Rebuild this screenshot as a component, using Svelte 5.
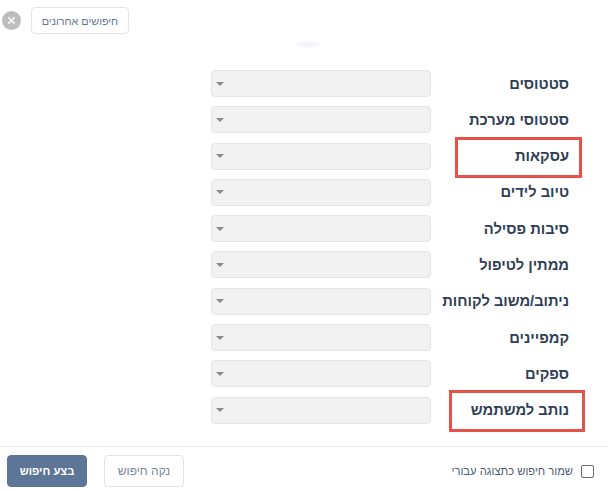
<script>
	const filters = [
		{ name: 'סטטוסים' },
		{ name: 'סטטוסי מערכת' },
		{ name: 'עסקאות', mark: 'deals' },
		{ name: 'טיוב לידים' },
		{ name: 'סיבות פסילה' },
		{ name: 'ממתין לטיפול' },
		{ name: 'ניתוב/משוב לקוחות' },
		{ name: 'קמפיינים' },
		{ name: 'ספקים' },
		{ name: 'נותב למשתמש', mark: 'owner' }
	];
</script>

<div class="panel" dir="rtl">
	<header class="top">
		<span class="close">
			<svg width="9" height="9" viewBox="0 0 10 10"><path d="M1.5 1.5l7 7M8.5 1.5l-7 7" stroke="#f4f4f4" stroke-width="2" /></svg>
		</span>
		<button class="btn recent">חיפושים אחרונים</button>
	</header>

	<div class="glow"></div>

	<div class="rows">
		{#each filters as f}
			<div class="row">
				<div class="label">
					<span>{f.name}</span>
					{#if f.mark}<i class="mark {f.mark}"></i>{/if}
				</div>
				<div class="select"><i class="caret"></i></div>
			</div>
		{/each}
	</div>

	<footer class="bottom">
		<label class="save">
			<span class="box"></span>
			<span>שמור חיפוש כתצוגה עבורי</span>
		</label>
		<div class="actions">
			<button class="btn clear">נקה חיפוש</button>
			<button class="btn run">בצע חיפוש</button>
		</div>
	</footer>
</div>

<style>
	:global(body) {
		background: #fff;
	}

	.panel {
		width: 608px;
		height: 491px;
		overflow: hidden;
		display: flex;
		flex-direction: column;
		font-family: "Liberation Sans", "Open Sans", sans-serif;
	}

	.top {
		display: flex;
		align-items: center;
		direction: ltr;
		gap: 10px;
		height: 27px;
		padding: 7px 0 0 2px;
	}

	.close {
		width: 19px;
		height: 19px;
		border-radius: 50%;
		background: #bdbdbd;
		display: flex;
		align-items: center;
		justify-content: center;
	}

	.btn {
		font-family: inherit;
		font-size: 12px;
		border-radius: 4px;
		border: 1px solid #e2e4e9;
		background: #fff;
		color: #5f7593;
		padding: 0;
		white-space: nowrap;
	}

	.recent {
		width: 98px;
		height: 27px;
		font-size: 10.8px;
	}

	.glow {
		width: 24px;
		height: 5px;
		margin: 8px auto 0 auto;
		border-radius: 50%;
		background: #f0f1fa;
		filter: blur(1px);
		transform: translateX(4px);
	}

	.rows {
		display: flex;
		flex-direction: column;
		gap: 9.3px;
		padding: 23px 39px 0 0;
		flex: 1;
	}

	.row {
		display: flex;
		align-items: center;
		height: 27px;
	}

	.label {
		position: relative;
		width: 138px;
		flex: none;
		font-size: 14.7px;
		font-weight: 700;
		color: #2f3e55;
		white-space: nowrap;
	}

	.mark {
		position: absolute;
		border: 3px solid #e8504a;
	}

	.deals {
		top: -11px;
		bottom: -14px;
		right: -13px;
		left: 24px;
	}

	.owner {
		top: -12px;
		bottom: -14px;
		right: -16px;
		left: 18px;
	}

	.select {
		width: 220px;
		height: 27px;
		box-sizing: border-box;
		background: #f1f1f1;
		border: 1px solid #e4e4e4;
		border-radius: 4px;
		display: flex;
		align-items: center;
		justify-content: flex-end;
		padding-left: 4px;
	}

	.caret {
		width: 0;
		height: 0;
		border-left: 4px solid transparent;
		border-right: 4px solid transparent;
		border-top: 4px solid #8a8a8a;
	}

	.bottom {
		display: flex;
		align-items: center;
		justify-content: space-between;
		height: 45px;
		box-sizing: border-box;
		border-top: 1px solid #e8e8f0;
		padding: 4px 14px 0 7px;
	}

	.save {
		display: flex;
		align-items: center;
		gap: 8px;
		font-size: 11.2px;
		color: #4d5c70;
	}

	.box {
		width: 13px;
		height: 13px;
		box-sizing: border-box;
		border: 1px solid #6b6b6b;
		border-radius: 2px;
		background: #fff;
	}

	.actions {
		display: flex;
		gap: 17px;
	}

	.clear {
		width: 80px;
		height: 32px;
		color: #75849b;
	}

	.run {
		width: 80px;
		height: 32px;
		background: #5d7597;
		border-color: #5d7597;
		color: #fff;
		font-size: 11.2px;
		font-weight: 700;
	}
</style>
